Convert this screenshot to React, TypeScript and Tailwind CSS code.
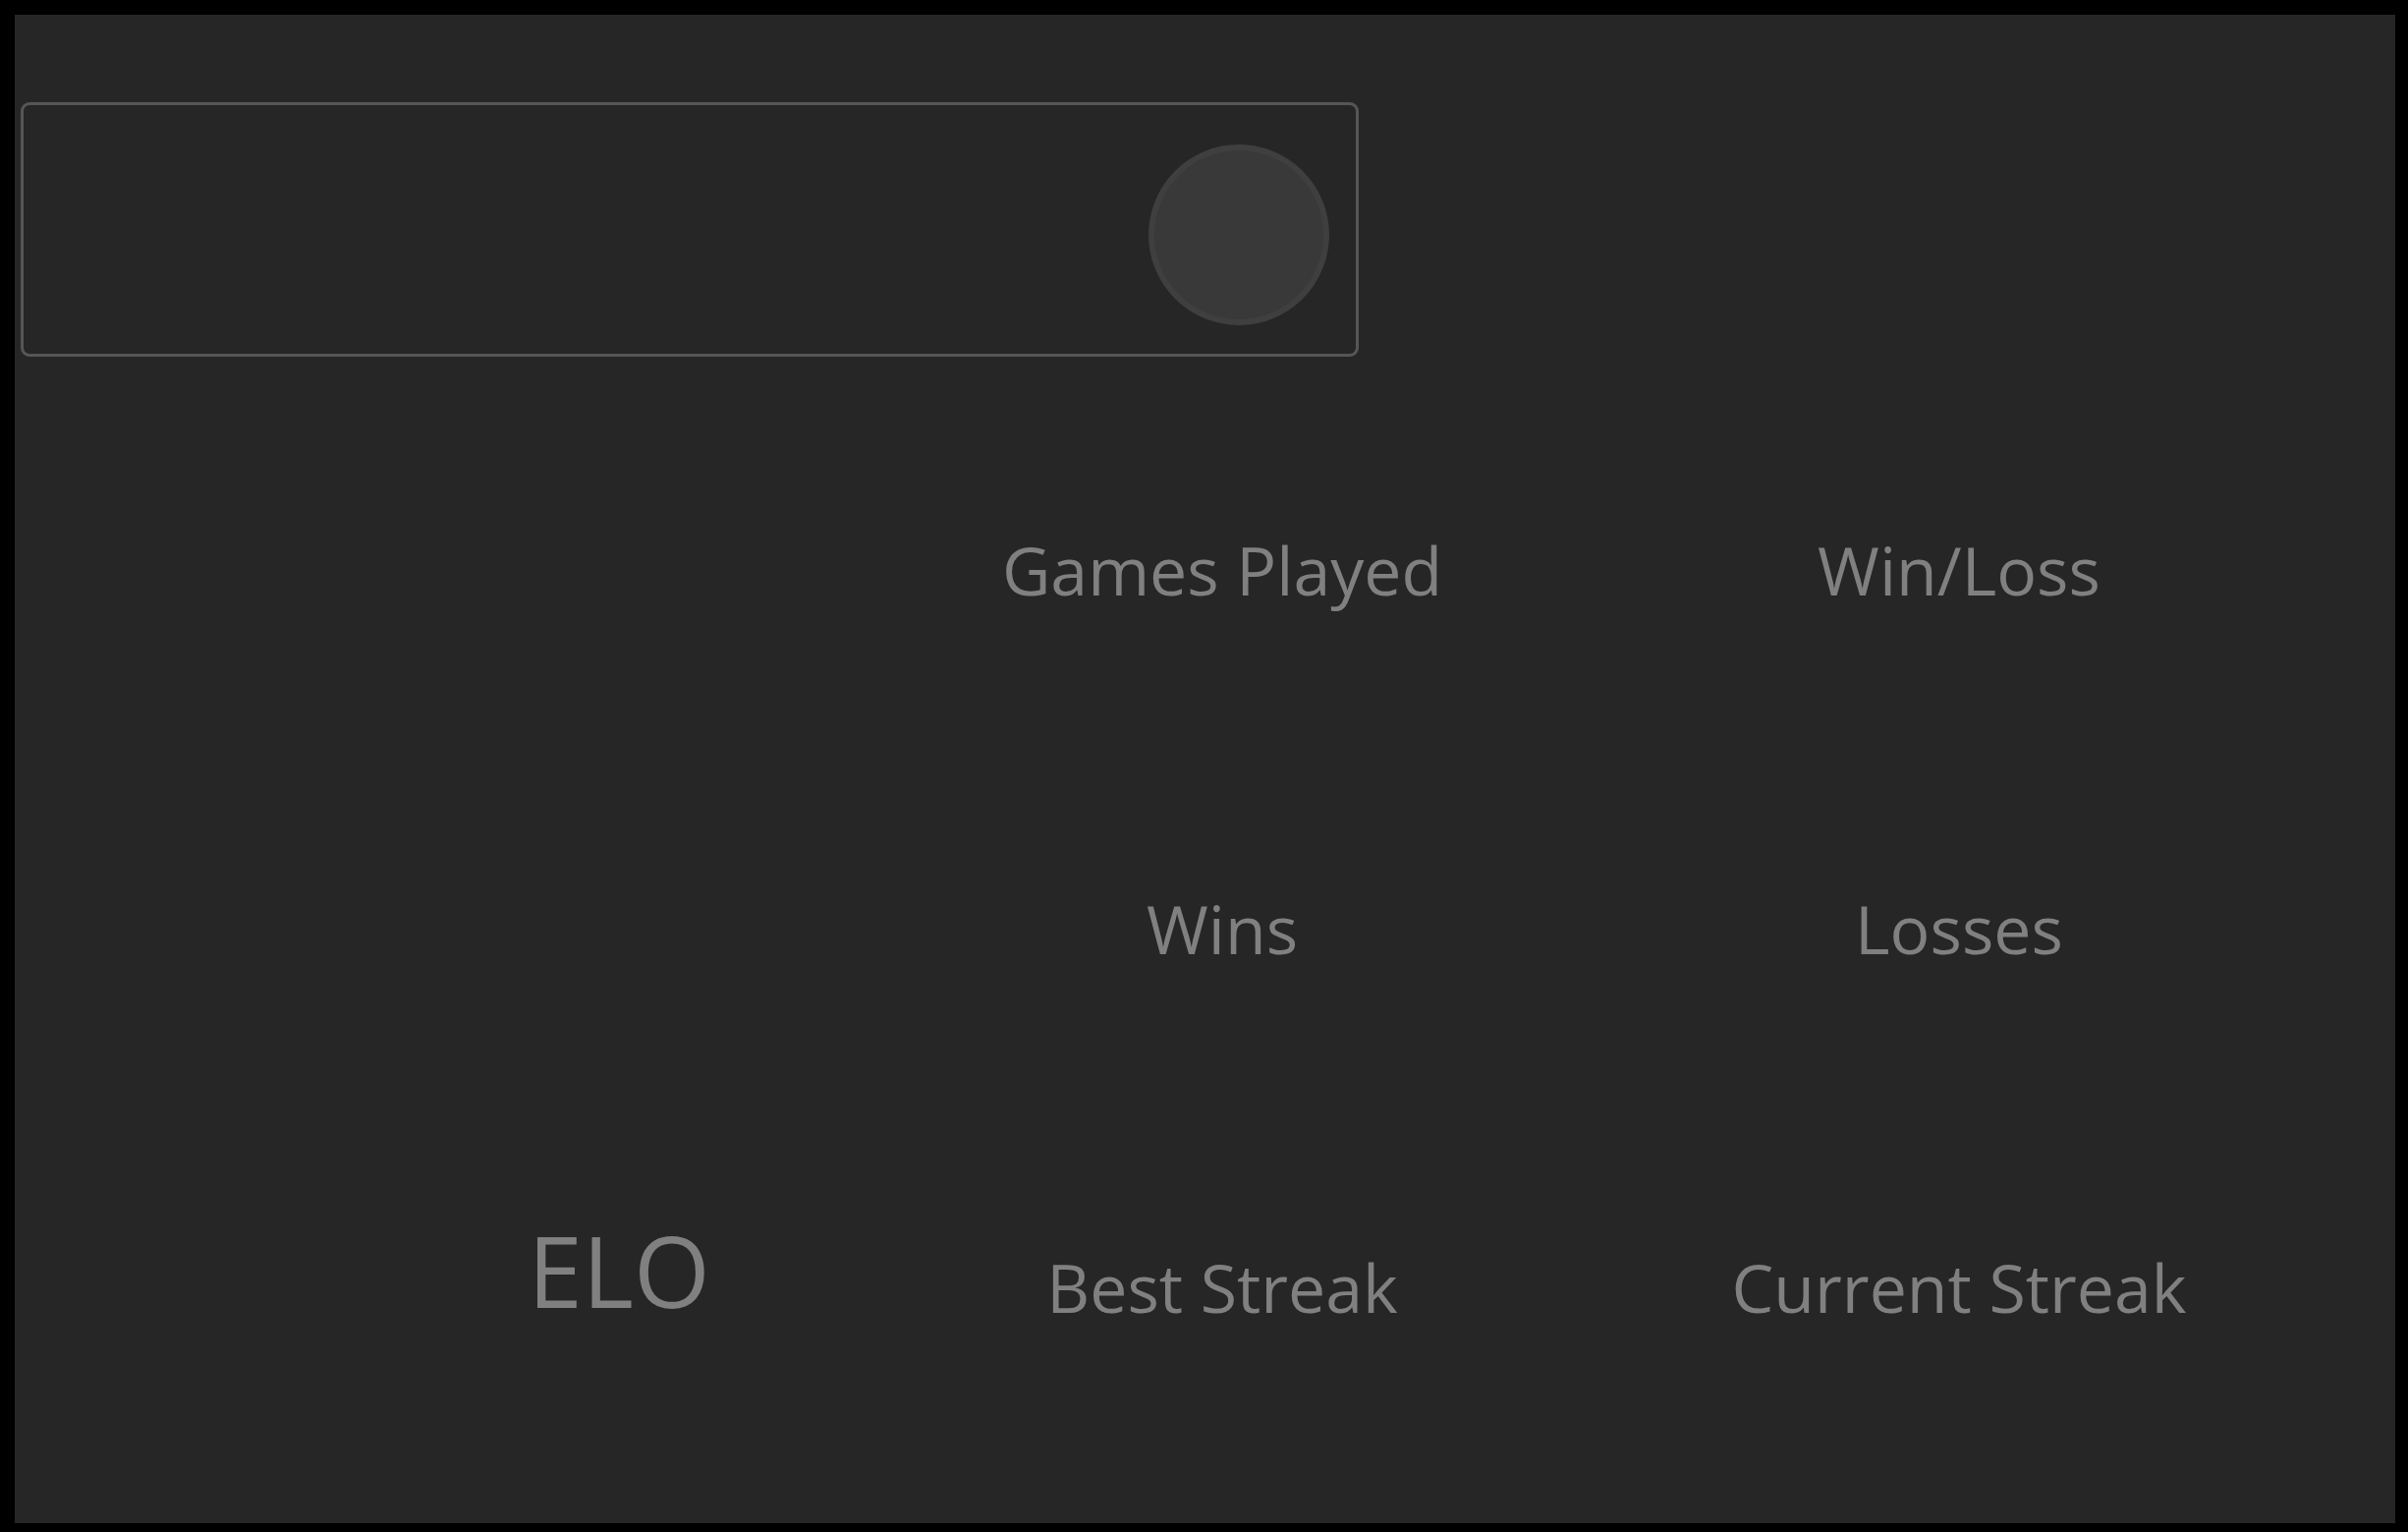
const stats = [
  ["Games Played", "Win/Loss"],
  ["Wins", "Losses"],
  ["Best Streak", "Current Streak"],
];

function StatLabel({ label }: { label: string }) {
  return (
    <div className="flex items-center justify-center">
      <span className="text-[68px] leading-none text-[#808080]">{label}</span>
    </div>
  );
}

export default function App() {
  return (
    <div
      className="h-[1559px] w-[2451px] bg-black pt-[15px] pr-[13px] pb-[9px] pl-[15px]"
      style={{ fontFamily: '"Open Sans", "Noto Sans", sans-serif' }}
    >
      <div className="flex h-full w-full flex-col bg-[#262626]">
        {/* profile box */}
        <div className="ml-[6px] mt-[89px] flex h-[259px] w-[1362px] items-center justify-end rounded-[9px] border-[3px] border-[#565656] pr-[27px]">
          <div className="mt-[10px] h-[184px] w-[184px] rounded-full border-[6px] border-[#3f3f3f] bg-[#393939]" />
        </div>

        <div className="mt-[34px] grid grid-cols-[854px_750px_750px] grid-rows-[365px_365px_365px]">
          <div />
          <StatLabel label={stats[0][0]} />
          <StatLabel label={stats[0][1]} />
          <div />
          <StatLabel label={stats[1][0]} />
          <StatLabel label={stats[1][1]} />
          <div className="flex items-center justify-center pl-[376px]">
            <span className="mb-[36px] text-[100px] leading-none text-[#808080]">ELO</span>
          </div>
          <StatLabel label={stats[2][0]} />
          <StatLabel label={stats[2][1]} />
        </div>
      </div>
    </div>
  );
}
